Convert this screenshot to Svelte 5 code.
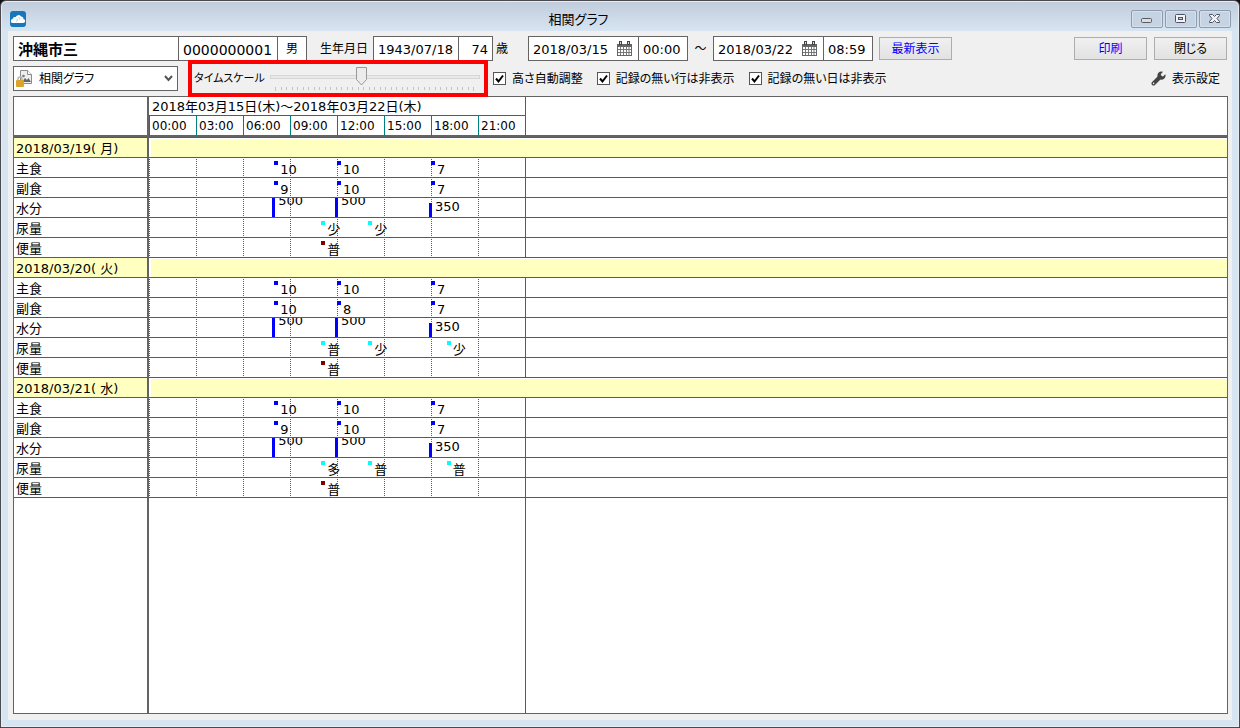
<script>
  const hours = ['00:00', '03:00', '06:00', '09:00', '12:00', '15:00', '18:00', '21:00'];
  const ticks = Array.from({ length: 37 }, (_, i) => i);

  const dots = (list, kind) => list.map(([hour, text]) => ({ hour, text, kind }));
  const water = [
    { hour: 8, text: '500', kind: 'bar full' },
    { hour: 12, text: '500', kind: 'bar full' },
    { hour: 18, text: '350', kind: 'bar part' }
  ];

  function day(date, main, side, urine, stool) {
    return {
      date,
      rows: [
        { name: '主食', marks: dots(main, 'blue') },
        { name: '副食', marks: dots(side, 'blue') },
        { name: '水分', marks: water },
        { name: '尿量', marks: dots(urine, 'cyan') },
        { name: '便量', marks: dots(stool, 'maroon') }
      ]
    };
  }

  const days = [
    day('2018/03/19( 月)', [[8, '10'], [12, '10'], [18, '7']], [[8, '9'], [12, '10'], [18, '7']], [[11, '少'], [14, '少']], [[11, '普']]),
    day('2018/03/20( 火)', [[8, '10'], [12, '10'], [18, '7']], [[8, '10'], [12, '8'], [18, '7']], [[11, '普'], [14, '少'], [19, '少']], [[11, '普']]),
    day('2018/03/21( 水)', [[8, '10'], [12, '10'], [18, '7']], [[8, '9'], [12, '10'], [18, '7']], [[11, '多'], [14, '普'], [19, '普']], [[11, '普']])
  ];

  let autoHeight = $state(true);
  let hideRows = $state(true);
  let hideDays = $state(true);
  let scale = $state(43);
</script>

{#snippet calendar()}
  <button class="cal" aria-label="カレンダー">
    <svg width="15" height="15" viewBox="0 0 15 15">
      <path d="M0 3h15v12H0z" fill="#666" />
      <path d="M1 6h13v8H1z" fill="#fff" />
      <path d="M1 8.500h13M1 11.500h13M3.500 6v8M6.500 6v8M9.500 6v8M12 6v8" stroke="#777" fill="none" />
      <path d="M2 0h3v4H2zM10 0h3v4h-3z" fill="#444" />
      <path d="M3 1h1v2H3zM11 1h1v2h-1z" fill="#ddd" />
    </svg>
  </button>
{/snippet}

<div class="window">
  <header>
    <svg class="app" width="16" height="16" viewBox="0 0 16 16">
      <rect width="16" height="16" rx="3" fill="#1777bd" />
      <path d="M3 12a2 2 0 0 1-.3-4 2.300 2.300 0 0 1 3-2A3 3 0 0 1 11 5.500a2.400 2.400 0 0 1 2.400 2.500 2 2 0 0 1-.4 4z" fill="#fff" />
      <path d="M6.500 10.500c1-.2 1-2 .3-2.800M8.500 6.500c1 .2 1.500 1.200 1.200 2" stroke="#9cc7e6" fill="none" />
    </svg>
    <h1>相関グラフ</h1>
    <div class="controls">
      <button aria-label="最小化"><svg width="14" height="14" viewBox="0 0 14 14"><rect x="1.500" y="6.500" width="10" height="4" rx="1" fill="#ddd" stroke="#555a66" /></svg></button>
      <button aria-label="最大化"><svg width="14" height="14" viewBox="0 0 14 14"><rect x="1.500" y="2.500" width="10" height="8" rx="1" fill="#f3f3f3" stroke="#4c5265" /><rect x="4.500" y="5.500" width="4" height="2" fill="#c9d5e3" stroke="#4c5265" /></svg></button>
      <button aria-label="ウィンドウを閉じる"><svg width="14" height="14" viewBox="0 0 14 14"><path d="M1.500 2.500h3l2 2 2-2h3v1L9 6.500l2.500 3v1h-3l-2-2-2 2h-3v-1L4 6.500l-2.500-3z" fill="#f3f3f3" stroke="#4c5265" /></svg></button>
    </div>
  </header>

  <main>
    <div class="bar1">
      <div class="group">
        <input class="name" aria-label="氏名" value="沖縄市三" readonly />
        <input class="id" aria-label="番号" value="0000000001" readonly />
        <input class="sex" aria-label="性別" value="男" readonly />
      </div>
      <label class="birth" for="birth">生年月日</label>
      <div class="group">
        <input class="date" id="birth" value="1943/07/18" readonly />
        <input class="age" id="age" value="74" readonly />
      </div>
      <label class="years" for="age">歳</label>
      <div class="group">
        <div class="picker"><input aria-label="開始日" value="2018/03/15" />{@render calendar()}</div>
        <input class="time" aria-label="開始時刻" value="00:00" />
      </div>
      <span class="to">～</span>
      <div class="group">
        <div class="picker"><input aria-label="終了日" value="2018/03/22" />{@render calendar()}</div>
        <input class="time" aria-label="終了時刻" value="08:59" />
      </div>
      <button class="btn blue-text latest">最新表示</button>
      <button class="btn blue-text push">印刷</button>
      <button class="btn close">閉じる</button>
    </div>

    <div class="bar2">
      <div class="combo">
        <svg class="doc" width="16" height="20" viewBox="0 0 16 20">
          <path d="M4.500 1.500h7l4 4v9h-11z" fill="#eee" stroke="#8b8b8b" />
          <path d="M11.500 1.500v4h4" fill="#fff" stroke="#8b8b8b" />
          <path d="M6 13l3-4 2 2 1.500-2L15 13z" fill="#666" />
          <circle cx="7.500" cy="7" r="1.300" fill="#777" />
          <path d="M2 12v-2a2 2 0 0 1 4 0v2" fill="none" stroke="#b5b5b5" stroke-width="1.500" />
          <rect x="0" y="11" width="8" height="7" rx="1" fill="#dda42c" />
        </svg>
        <select aria-label="表示種別"><option>相関グラフ</option></select>
        <svg class="chev" width="9" height="7" viewBox="0 0 9 7"><path d="M1 1l3.500 4L8 1" fill="none" stroke="#555" stroke-width="2" /></svg>
      </div>
      <div class="scale">
        <label for="scale">タイムスケール</label>
        <div class="slider">
          <input id="scale" type="range" min="0" max="100" bind:value={scale} />
          <svg height="4" viewBox="0 0 200 4" width="200">
            {#each ticks as i}
              <rect x={Math.round(i * 5.5)} y="0" width="1" height={i === 0 || i === 36 ? 4 : 3} fill="#c4c4c4" />
            {/each}
          </svg>
        </div>
      </div>
      <label class="check"><input type="checkbox" bind:checked={autoHeight} />高さ自動調整</label>
      <label class="check"><input type="checkbox" bind:checked={hideRows} />記録の無い行は非表示</label>
      <label class="check"><input type="checkbox" bind:checked={hideDays} />記録の無い日は非表示</label>
      <button class="settings">
        <svg width="15" height="15" viewBox="0 0 15 15">
          <path d="M2.500 12.500L9 6" stroke="#444" stroke-width="4" stroke-linecap="round" />
          <path d="M7 6.500A4 4 0 0 1 12 .8L9.800 3.200l.4 1.800 1.800.4 2.300-2.200A4 4 0 0 1 8.500 8z" fill="#444" />
          <circle cx="2.600" cy="12.400" r=".8" fill="#eee" />
        </svg>
        表示設定
      </button>
    </div>

    <section class="chart">
      <table>
        <colgroup>
          <col class="c-label" />
          {#each hours as h}<col class="c-hour" />{/each}
          <col />
        </colgroup>
        <thead>
          <tr>
            <td class="corner" rowspan="2"></td>
            <th class="range" colspan="8">2018年03月15日(木)～2018年03月22日(木)</th>
            <td class="outside" rowspan="2"></td>
          </tr>
          <tr>
            {#each hours as h}<th class="hour">{h}</th>{/each}
          </tr>
        </thead>
        <tbody>
          {#each days as d}
            <tr class="day">
              <th>{d.date}</th>
              <td colspan="9"><div class="fill"></div></td>
            </tr>
            {#each d.rows as row}
              <tr>
                <th>{row.name}</th>
                <td colspan="8">
                  <div class="lane">
                    {#each row.marks as m}
                      <span class="mark {m.kind}" style="left: {(m.hour / 24) * 100}%"><i></i><b>{m.text}</b></span>
                    {/each}
                  </div>
                </td>
                <td class="outside"></td>
              </tr>
            {/each}
          {/each}
        </tbody>
      </table>
      <div class="rest"><div></div><div></div></div>
    </section>
  </main>
</div>

<style>
  :global(body) {
    margin: 0;
    background: #111;
  }
  .window, .window * {
    box-sizing: border-box;
  }
  .window {
    display: flex;
    flex-direction: column;
    min-height: 100vh;
    padding: 0 7px 7px;
    border: 1px solid #4b494d;
    border-radius: 6px 6px 0 0;
    background: linear-gradient(#c0ccdb, #d7e4f2 30px);
    box-shadow: inset 0 0 0 1px #e6edf6;
    font: 12px/18px "DejaVu Sans", "Noto Sans CJK JP", sans-serif;
    font-feature-settings: "palt";
    color: #000;
  }
  input, button, select {
    margin: 0;
    font: inherit;
    font-feature-settings: inherit;
    color: inherit;
    border-radius: 0;
  }
  header {
    display: flex;
    align-items: center;
    height: 30px;
    padding: 6px 1px 0 2px;
  }
  h1 {
    flex: 1;
    margin: 0;
    padding-top: 2px;
    font-size: 13px;
    font-weight: 400;
    line-height: 20px;
    text-align: center;
  }
  .controls {
    display: flex;
    justify-content: flex-end;
    gap: 2px;
  }
  .controls button {
    display: flex;
    align-items: center;
    justify-content: center;
    width: 32px;
    height: 18px;
    padding: 0;
    border: 1px solid #8c9bb0;
    border-radius: 2px;
    background: #c6d3e3;
    box-shadow: inset 0 0 0 1px #d6e1ee;
  }
  main {
    flex: 1;
    display: flex;
    flex-direction: column;
    padding: 5px 4px 6px 5px;
    background: #f0f0f0;
  }
  .bar1, .bar2 {
    display: flex;
    align-items: center;
    white-space: nowrap;
  }
  .bar1 {
    height: 25px;
  }
  .group {
    display: flex;
    height: 25px;
    border: 1px solid #646464;
    background: #fff;
    font-size: 13px;
  }
  .group input {
    min-width: 0;
    padding: 2px 4px 0;
    border: 0;
    background: none;
    outline: 0;
  }
  .group > * + * {
    border-left: 1px solid #646464 !important;
  }
  .group .name {
    width: 164px;
    font-size: 15px;
    font-weight: 700;
  }
  .group .id {
    width: 99px;
    font-size: 14px;
  }
  .group .sex {
    width: 29px;
    padding-top: 0;
    font-size: 12px;
    text-align: center;
  }
  .birth {
    margin: 0 5px 0 13px;
  }
  .date {
    width: 84px;
  }
  .age {
    width: 34px;
    text-align: right;
  }
  .years {
    margin: 0 20px 0 3px;
  }
  .to {
    width: 25px;
    text-align: center;
  }
  .picker {
    display: flex;
    align-items: center;
    width: 109px;
  }
  .picker input {
    width: 88px;
  }
  .cal {
    display: flex;
    padding: 0;
    border: 0;
    background: none;
  }
  .group .time {
    width: 49px;
    padding-right: 0;
  }
  .btn {
    width: 73px;
    height: 23px;
    padding: 0;
    border: 1px solid #adadad;
    background: linear-gradient(#f0f0f0, #e2e2e2);
  }
  .blue-text {
    color: #00f;
  }
  .latest {
    margin-left: 6px;
  }
  .push {
    margin-left: auto;
  }
  .close {
    margin: 0 1px 0 7px;
  }
  .bar2 {
    height: 35px;
    padding: 0 8px 0 0;
  }
  .combo {
    position: relative;
    display: flex;
    align-items: center;
    width: 165px;
    height: 25px;
    border: 1px solid #646464;
    background: #fff;
  }
  .combo select {
    width: 100%;
    height: 23px;
    padding: 0 20px 0 25px;
    border: 0;
    appearance: none;
    background: none;
  }
  .doc, .chev {
    position: absolute;
    pointer-events: none;
  }
  .doc {
    left: 2px;
  }
  .chev {
    right: 4px;
  }
  .scale {
    z-index: 1;
    flex: none;
    display: flex;
    align-items: center;
    width: 300px;
    height: 37px;
    margin: 0 5px 0 10px;
    padding-left: 2px;
    border: 4px solid #f00;
    font-size: 11px;
  }
  .scale label {
    width: 76px;
  }
  .slider {
    width: 210px;
  }
  .slider input {
    display: block;
    width: 210px;
    height: 20px;
    appearance: none;
    background: linear-gradient(#d6d6d6, #d6d6d6) center / 100% 4px no-repeat;
  }
  .slider input::-webkit-slider-runnable-track {
    height: 20px;
    background: linear-gradient(#e7eaea, #e7eaea) center / 208px 2px no-repeat;
  }
  .slider input::-webkit-slider-thumb {
    appearance: none;
    width: 11px;
    height: 19px;
    background: url("data:image/svg+xml,%3Csvg xmlns='http://www.w3.org/2000/svg' width='11' height='19'%3E%3Cpath d='M.5.5h10v12l-5 5.500-5-5.500z' fill='%23ececec' stroke='%23999'/%3E%3C/svg%3E") no-repeat;
  }
  .slider svg {
    display: block;
    margin-left: 5px;
  }
  .check {
    display: flex;
    align-items: center;
    gap: 6px;
    margin-right: 14px;
  }
  .check input {
    width: 13px;
    height: 13px;
    border: 1px solid #555;
    appearance: none;
    background: #fff;
  }
  .check input:checked {
    background: #fff url("data:image/svg+xml,%3Csvg xmlns='http://www.w3.org/2000/svg' width='11' height='11'%3E%3Cpath d='M2 5.500l2.500 3L9 2.500' fill='none' stroke='%23000' stroke-width='2'/%3E%3C/svg%3E") no-repeat;
  }
  .settings {
    display: flex;
    align-items: center;
    gap: 6px;
    margin-left: auto;
    padding: 0;
    border: 0;
    background: none;
  }
  .chart {
    flex: 1;
    display: flex;
    flex-direction: column;
    border: 1px solid #646464;
    background: #fff;
    font-size: 13px;
    font-feature-settings: normal;
  }
  table {
    width: 100%;
    table-layout: fixed;
    border-collapse: separate;
    border-spacing: 0;
  }
  .c-label {
    width: 135px;
  }
  .c-hour {
    width: 47px;
  }
  th, td {
    height: 20px;
    padding: 0;
    border-bottom: 1px solid #008080;
    font-weight: 400;
    text-align: left;
    line-height: 17px;
    white-space: nowrap;
  }
  thead th {
    height: 19px;
    padding: 2px 0 0 3px;
    line-height: 16px;
  }
  thead .hour {
    height: 21px;
    padding-left: 2px;
    border-left: 1px solid #008080;
    border-bottom: 2px solid #646464;
    font-size: 12px;
    line-height: 17px;
  }
  thead td {
    border-bottom: 2px solid #646464;
  }
  .corner, tbody th {
    border-right: 2px solid #646464;
  }
  tbody th {
    padding: 2px 0 0 2px;
  }
  .outside {
    border-left: 1px solid #008080;
  }
  tbody tr:first-child > * {
    height: 21px;
    border-top: 1px solid #008080;
  }
  .day th {
    background: #ffffc0;
  }
  .day td {
    padding: 1px 0 0 2px;
  }
  .fill {
    height: 18px;
    background: #ffffc0;
  }
  .lane {
    position: relative;
    height: 19px;
    overflow: hidden;
    background:
      repeating-linear-gradient(#fff 0 1px, transparent 1px 2px),
      repeating-linear-gradient(to right, #008080 0 1px, transparent 1px 47px);
  }
  .mark {
    position: absolute;
    top: 3px;
  }
  .mark i {
    position: absolute;
    width: 4px;
    height: 4px;
    background: #00f;
  }
  .mark b {
    position: absolute;
    top: 0;
    left: 6px;
    font-weight: 400;
    line-height: 18px;
  }
  .mark.cyan i {
    background: #0ff;
  }
  .mark.maroon i {
    background: #800000;
  }
  .mark.bar {
    top: 0;
  }
  .mark.bar i {
    left: -2px;
    width: 3px;
    height: 19px;
  }
  .mark.bar b {
    left: 4px;
    top: -6px;
  }
  .mark.part i {
    top: 5px;
    height: 14px;
  }
  .mark.part b {
    top: 0;
  }
  .rest {
    flex: 1;
    display: grid;
    grid-template-columns: 135px 377px;
  }
  .rest div {
    border-right: 2px solid #646464;
  }
  .rest div + div {
    border-right: 1px solid #008080;
  }
</style>
